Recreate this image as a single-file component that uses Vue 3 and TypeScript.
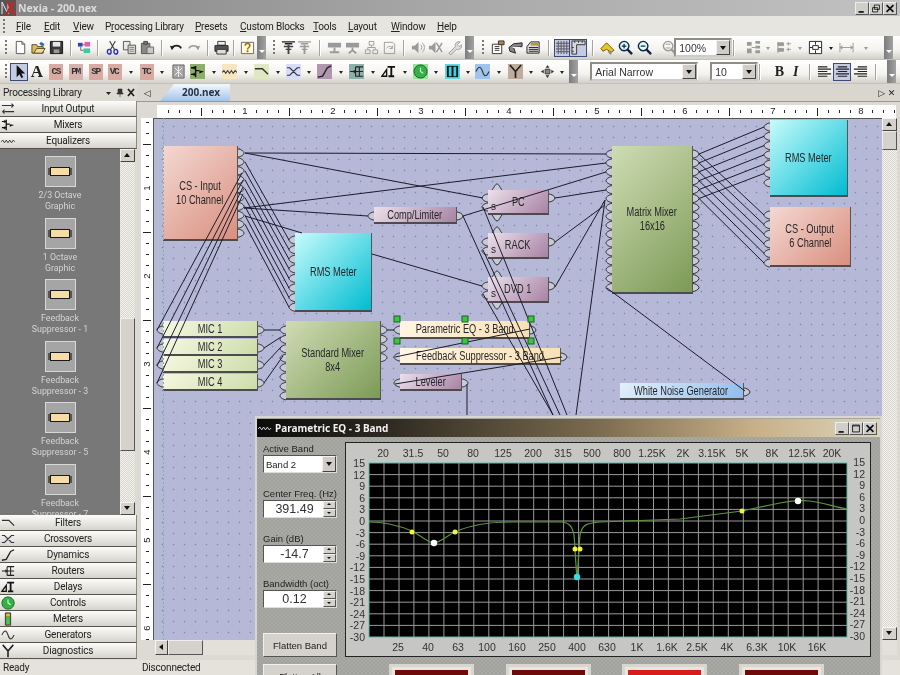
<template>
  <div class="app">
    <div class="titlebar">
      <svg class="logo" viewBox="0 0 16 16">
        <rect width="16" height="16" fill="#555" />
        <path d="M2 14V2M2 2l6 12M8 14V2" stroke="#eee" fill="none" />
        <path d="M6 15L14 1M7 1l8 14" stroke="#c02828" stroke-width="2.4" fill="none" />
      </svg>
      <span class="app-title">Nexia - 200.nex</span>
      <div class="win-btns">
        <span class="win-btn"><svg viewBox="0 0 14 12"><path d="M3 9h6v2H3z" fill="#111" /></svg></span>
        <span class="win-btn"><svg viewBox="0 0 14 12"><path d="M5 2h6v5H5zM3 5h6v5H3z" fill="#ddd" stroke="#111" /></svg></span>
        <span class="win-btn"><svg viewBox="0 0 14 12"><path d="M3 2l8 8M11 2l-8 8" stroke="#111" stroke-width="2" /></svg></span>
      </div>
    </div>

    <div class="menubar">
      <span class="grip grip-menu"></span>
      <span v-for="m in menus" :key="m.label" class="menu-item" :style="{ width: m.w + 'px' }">
        {{ m.pre }}<u>{{ m.key }}</u>{{ m.post }}
      </span>
    </div>

    <div v-for="(bar, b) in toolbars" :key="b" class="toolbar">
      <div
        v-for="(it, i) in bar"
        :key="i"
        class="slot"
        :style="{ width: it.w + 'px' }"
      >
        <span v-if="it.k === 'sep'" class="sep"></span>
        <span v-else-if="it.k === 'grip'" class="grip"></span>
        <span v-else-if="it.k === 'handle'" class="handle"><i></i></span>
        <span v-else-if="it.k === 'dd'" class="dd" :class="{ off: it.off }"></span>
        <span v-else-if="it.k === 'combo'" class="combo" :style="{ width: it.cw + 'px' }">
          <span class="combo-text">{{ it.t }}</span><span class="combo-btn"></span>
        </span>
        <span v-else-if="it.k === 'txt'" class="txt-tile" :style="{ background: it.bg }">{{ it.t }}</span>
        <span v-else-if="it.k === 'glyph'" class="glyph" :class="it.n">{{ it.t }}</span>
        <span v-else class="tool" :class="{ sel: it.sel }" :style="{ background: it.bg }">
          <svg viewBox="0 0 16 16" width="15" height="15">
            <path
              v-for="(s, j) in icons[it.n ?? '']"
              :key="j"
              :d="s.d"
              :fill="s.f ?? 'none'"
              :stroke="s.s ?? 'none'"
              :stroke-width="s.w ?? 1"
            />
          </svg>
        </span>
      </div>
    </div>

    <div class="main">
      <aside class="panel">
        <div class="panel-head">
          <span>Processing Library</span>
          <span class="panel-tools">
            <svg viewBox="0 0 30 10" width="30" height="10">
              <path d="M1 4h5l-2.500 3z" fill="#222" />
              <path d="M13 1h4v4h1v1h-6V5h1zM15 6v3" fill="#333" stroke="#333" stroke-width=".6" />
              <path d="M23 1l6 7M29 1l-6 7" stroke="#222" stroke-width="1.800" />
            </svg>
          </span>
        </div>
        <div v-for="c in topCats" :key="c.label" class="cat">
          <svg viewBox="0 0 16 16" width="14" height="14" class="cat-icon">
            <path v-for="(s, j) in icons[c.icon]" :key="j" :d="s.d" :fill="s.f ?? 'none'" :stroke="s.s ?? 'none'" :stroke-width="s.w ?? 1" />
          </svg>
          <span>{{ c.label }}</span>
        </div>
        <div class="lib">
          <div class="lib-list">
            <div v-for="item in libItems" :key="item.join()" class="lib-item">
              <span class="lib-tile"><i></i></span>
              <span v-for="line in item" :key="line" class="lib-label">{{ line }}</span>
            </div>
          </div>
          <div class="vscroll lib-scroll">
            <span class="sb-btn up"></span>
            <span class="sb-track"><span class="sb-thumb"></span></span>
            <span class="sb-btn down"></span>
          </div>
        </div>
        <div v-for="c in bottomCats" :key="c.label" class="cat">
          <svg viewBox="0 0 16 16" width="14" height="14" class="cat-icon">
            <path v-for="(s, j) in icons[c.icon]" :key="j" :d="s.d" :fill="s.f ?? 'none'" :stroke="s.s ?? 'none'" :stroke-width="s.w ?? 1" />
          </svg>
          <span>{{ c.label }}</span>
        </div>
      </aside>

      <section class="doc">
        <div class="tabs">
          <span class="tab-arrow">◁</span>
          <span class="tab">200.nex</span>
          <span class="tab-end">▷&nbsp;✕</span>
        </div>
        <div class="hruler">
          <svg viewBox="157 0 739 13" width="739" height="13">
            <path :d="hTicks" stroke="#222" fill="none" />
            <text v-for="n in 8" :key="n" :x="157 + n * 88" y="9" class="ruler-num">{{ n }}</text>
          </svg>
        </div>
        <div class="work">
          <div class="vruler">
            <svg viewBox="0 118 12 522" width="12" height="522">
              <path :d="vTicks" stroke="#222" fill="none" />
              <text v-for="n in 6" :key="n" x="6" :y="100 + n * 88" class="ruler-num" :transform="`rotate(-90 6 ${100 + n * 88}) translate(0 3)`">{{ n }}</text>
            </svg>
          </div>
          <div class="canvas">
            <div
              v-for="n in nodes"
              :key="n.id"
              class="node"
              :class="n.cls"
              :style="{ left: n.x - 153 + 'px', top: n.y - 118 + 'px', width: n.w + 'px', height: n.h + 'px' }"
            >
              <span v-for="line in n.lines" :key="line">{{ line }}</span>
            </div>
            <svg class="wires" viewBox="153 118 729 522" width="729" height="522">
              <path d="M163.500 118V640" stroke="#7fb4a4" stroke-dasharray="2 2" fill="none" />
              <path :d="portPaths" fill="#c9cad6" stroke="#2c2c34" stroke-width="1" />
              <path :d="wirePaths" fill="none" stroke="#1c1c2c" stroke-width="1" />
              <text v-for="y in [210, 253, 297]" :key="y" x="491" :y="y" class="s-label">s</text>
              <rect v-for="(h, i) in handles" :key="i" :x="h[0] - 3" :y="h[1] - 3" width="6" height="6" fill="#3ec43e" stroke="#14641c" />
            </svg>
          </div>
          <div class="vscroll main-scroll">
            <span class="sb-btn up"></span>
            <span class="main-thumb"></span>
            <span class="sb-track"></span>
            <span class="sb-btn down"></span>
          </div>
        </div>
        <div class="hscroll">
          <span class="sb-btn left"></span>
          <span class="h-thumb"></span>
        </div>
      </section>
    </div>

    <div class="statusbar">
      <span class="st-ready">Ready</span>
      <span>Disconnected</span>
    </div>

    <div class="eq-window">
      <div class="eq-title">
        <svg viewBox="0 0 16 8" width="15" height="8"><path d="M0 5l2-2 2 3 2-3 2 3 2-3 2 3 2-2" stroke="#ddd" fill="none" /></svg>
        <span>Parametric EQ - 3 Band</span>
        <div class="win-btns eq-btns">
          <span class="win-btn"><svg viewBox="0 0 14 12"><path d="M3 9h6v2H3z" fill="#111" /></svg></span>
          <span class="win-btn"><svg viewBox="0 0 14 12"><path d="M3 2h8v8H3z M3 3h8" fill="none" stroke="#111" /></svg></span>
          <span class="win-btn"><svg viewBox="0 0 14 12"><path d="M3 2l8 8M11 2l-8 8" stroke="#111" stroke-width="2" /></svg></span>
        </div>
      </div>
      <div class="eq-body">
        <div class="eq-controls">
          <label>Active Band</label>
          <div class="eq-select"><span>Band 2</span><span class="combo-btn"></span></div>
          <template v-for="f in fields" :key="f.label">
            <label>{{ f.label }}</label>
            <div class="eq-spin">
              <span class="spin-val">{{ f.value }}</span>
              <span class="spin-btns"><i class="u"></i><i class="d"></i></span>
            </div>
          </template>
          <button class="eq-btn first">Flatten Band</button>
          <button class="eq-btn">Flatten All</button>
        </div>
        <div class="eq-right">
          <div class="eq-chart">
            <svg viewBox="345 442 526 215" width="526" height="215">
              <rect x="369" y="463" width="478" height="174" fill="#000" stroke="#5fb7a8" />
              <path :d="gridPath" stroke="#9a9a9a" fill="none" />
              <path :d="curve" stroke="#5f9440" fill="none" stroke-width="1.200" />
              <circle v-for="(p, i) in yellowDots" :key="i" :cx="p[0]" :cy="p[1]" r="2.500" fill="#f2f23c" />
              <circle cx="434" cy="543" r="3.200" fill="#fff" />
              <circle cx="798" cy="501" r="3.200" fill="#fff" />
              <circle cx="577" cy="577" r="3.200" fill="#30e0e0" />
              <text v-for="t in topLabels" :key="t[0]" :x="t[1]" y="457" class="ax" text-anchor="middle">{{ t[0] }}</text>
              <text v-for="t in bottomLabels" :key="t[0]" :x="t[1]" y="651" class="ax" text-anchor="middle">{{ t[0] }}</text>
              <template v-for="(v, i) in dbLabels" :key="v">
                <text x="365" :y="467 + i * 11.600" class="ax" text-anchor="end">{{ v }}</text>
                <text x="865" :y="466 + i * 11.600" class="ax" text-anchor="end">{{ v }}</text>
              </template>
            </svg>
          </div>
          <div class="eq-meters">
            <span v-for="(m, i) in meters" :key="i" class="meter" :class="{ hot: m }"><i></i></span>
          </div>
        </div>
      </div>
    </div>
  </div>
</template>

<script setup lang="ts">
import { computed } from 'vue';

interface Shape { d: string; f?: string; s?: string; w?: number }
interface BarItem {
  c: number; k?: string; n?: string; t?: string; bg?: string; sel?: boolean; off?: boolean; cw?: number; w?: number;
}

const menus = [
  { label: 'File', pre: '', key: 'F', post: 'ile', w: 28 },
  { label: 'Edit', pre: '', key: 'E', post: 'dit', w: 29 },
  { label: 'View', pre: '', key: 'V', post: 'iew', w: 32 },
  { label: 'Processing Library', pre: 'P', key: 'r', post: 'ocessing Library', w: 90 },
  { label: 'Presets', pre: '', key: 'P', post: 'resets', w: 45 },
  { label: 'Custom Blocks', pre: '', key: 'C', post: 'ustom Blocks', w: 73 },
  { label: 'Tools', pre: '', key: 'T', post: 'ools', w: 35 },
  { label: 'Layout', pre: '', key: 'L', post: 'ayout', w: 43 },
  { label: 'Window', pre: '', key: 'W', post: 'indow', w: 46 },
  { label: 'Help', pre: '', key: 'H', post: 'elp', w: 30 }
];

const g = '#9a9a9a';
const icons: Record<string, Shape[]> = {
  new: [{ d: 'M3.500 1.500h6l3 3v10h-9z', f: '#fff', s: '#555' }, { d: 'M9.500 1.500v3h3', s: '#555' }],
  open: [{ d: 'M1 14V5h5l1 2h6v7z', f: '#d8bc62', s: '#5a4a20' }, { d: 'M3 14l3-5h9l-3 5z', f: '#efdc94', s: '#5a4a20' }, { d: 'M9 4c1-2 3-2 4 0l1-1v3h-3z', f: '#2d6fb5' }],
  save: [{ d: 'M1.500 1.500h13v13h-13z', f: '#3a3a3a', s: '#111' }, { d: 'M4 2h8v5H4z', f: '#e6e6e6' }, { d: 'M5 10h6v4H5z', f: '#999' }],
  color: [{ d: 'M1 3h5v4H1z', f: '#2a3fd0' }, { d: 'M8 2h6v5H8z', f: '#e060b0' }, { d: 'M7 9h7v5H7z', f: '#40c8a0' }, { d: 'M6 5h2M4 7v4h3', s: '#666' }],
  cut: [{ d: 'M5 1l5 9M11 1L6 10', s: '#444', w: 1.2 }, { d: 'M4.500 10a2 2.500 0 1 0 .1 5 2 2.500 0 1 0-.1-5zM11.500 10a2 2.500 0 1 0 .1 5 2 2.500 0 1 0-.1-5z', s: '#2a2ac0', w: 1.5 }],
  copy: [{ d: 'M1.500 1.500h7v9h-7z', f: '#e8e8e8', s: '#555' }, { d: 'M6.500 5.500h8v9h-8z', f: '#d8d8d0', s: '#555' }, { d: 'M8 8h5M8 10h5M8 12h5', s: '#888' }],
  paste: [{ d: 'M1.500 3.500h9v11h-9z', f: '#888', s: '#555' }, { d: 'M4 1.500h4v3H4z', f: '#777', s: '#444' }, { d: 'M7.500 7.500h7v7h-7z', f: '#c8c8c8', s: '#666' }],
  undo: [{ d: 'M3 9c2-4 8-4 10 0', s: '#222', w: 1.8 }, { d: 'M1 6l5 1-3 4z', f: '#222' }],
  redo: [{ d: 'M3 9c2-4 8-4 10 0', s: g, w: 1.6 }, { d: 'M15 6l-5 1 3 4z', f: g }],
  print: [{ d: 'M4 1.500h8v4H4z', f: '#eee', s: '#333' }, { d: 'M1 6h14v6H1z', f: '#555', s: '#222' }, { d: 'M3 10h10v5H3z', f: '#ddd', s: '#333' }],
  help: [{ d: 'M1.500 2.500h13v12h-13z', f: '#fffbe0', s: '#666' }, { d: 'M5.500 6c0-3 5-3 5 0 0 2-2.500 2-2.500 4', s: '#a07000', w: 1.6 }, { d: 'M7 11h2v2H7z', f: '#a07000' }],
  alignA: [{ d: 'M1 2h14M4 4h8', s: '#222', w: 1.5 }, { d: 'M3 7h10M5 10h6', s: '#444', w: 1.5 }, { d: 'M8 5v10', s: '#444', w: 2 }],
  alignB: [{ d: 'M1 2h14M4 4h8', s: g, w: 1.5 }, { d: 'M3 7h10M5 10h6', s: g, w: 1.5 }, { d: 'M8 5v10', s: g, w: 2 }],
  netA: [{ d: 'M1 3h14v5H1z', f: g }, { d: 'M8 8v4M3 13h10', s: g, w: 2 }],
  netB: [{ d: 'M1 3h14v5H1z', f: g }, { d: 'M8 8v3M4 14l4-3 4 3', s: g, w: 2 }],
  tree: [{ d: 'M5.500 1.500h5v4h-5zM1.500 10.500h5v4h-5zM9.500 10.500h5v4h-5z', s: g }, { d: 'M8 6v2M4 10V8h8v2', s: g }],
  page: [{ d: 'M2.500 2.500h9l2 2v10h-11z', s: g }, { d: 'M5 9c1-3 5-3 6 0M11 6v3H8', s: g }],
  speaker: [{ d: 'M1 6h3l4-4v12l-4-4H1z', f: g }, { d: 'M10 5c2 1 2 5 0 6M12 3c3 2 3 8 0 10', s: g }],
  mute: [{ d: 'M1 6h3l4-4v12l-4-4H1z', f: g }, { d: 'M9 3l6 10M15 3L9 13', s: g, w: 1.6 }],
  wrench: [{ d: 'M2 14l7-7c-1-3 1-6 5-5l-3 3 2 2 3-2c0 4-3 6-6 5l-6 6z', s: g, f: '#ddd' }],
  propA: [{ d: 'M2.500 4.500h10v10h-10z', f: '#fff', s: '#333' }, { d: 'M5 7h5M5 9h5M5 11h5', s: '#333' }, { d: 'M9 1h6v4H9z', f: '#b08a3a', s: '#333' }],
  propB: [{ d: 'M1 8l5-4 9-1v4l-9 1 2 6-6-2z', f: '#888', s: '#222' }, { d: 'M5 8h8', s: '#fff' }],
  propC: [{ d: 'M1 14V7l4-5h9v12z', f: '#ddd', s: '#222' }, { d: 'M3 8h10M3 10h10M3 12h10', s: '#222' }, { d: 'M5 3h8v3H5z', f: '#b89a3a' }],
  grid: [{ d: 'M1 3.500h14M1 6.500h14M1 9.500h14M1 12.500h14M3.500 1v14M6.500 1v14M9.500 1v14M12.500 1v14', s: '#555' }],
  rulers: [{ d: 'M1 1h14v4H6v10H1z', f: '#d8d8d8', s: '#333' }, { d: 'M4 1v2M8 1v2M12 1v2M1 8h2M1 12h2', s: '#333' }],
  hilite: [{ d: 'M1 9l6-6 8 8-3 2-5-3-4 2z', f: '#e8c820', s: '#6a5a10' }, { d: 'M9 12l3 3', s: '#888', w: 2 }],
  zoomIn: [{ d: 'M6.500 1.500a5 5 0 1 0 .1 0z', f: '#dff', s: '#124', w: 1.5 }, { d: 'M10 10l5 5', s: '#124', w: 2.5 }, { d: 'M4 6.500h5M6.500 4v5', s: '#124', w: 1.3 }],
  zoomOut: [{ d: 'M6.500 1.500a5 5 0 1 0 .1 0z', f: '#dff', s: '#124', w: 1.5 }, { d: 'M10 10l5 5', s: '#124', w: 2.5 }, { d: 'M4 6.500h5', s: '#124', w: 1.3 }],
  zoomFit: [{ d: 'M6.500 1.500a5 5 0 1 0 .1 0z', s: g, w: 1.5 }, { d: 'M10 10l5 5', s: g, w: 2.5 }, { d: 'M4 4.500h5M4 8.500h5', s: g }],
  distA: [{ d: 'M1 2h5v4H1zM1 9h5v5H1zM10 1h5v3h-5zM10 6h5v3h-5zM10 11h5v3h-5z', f: g }, { d: 'M6 8h4', s: g }],
  distB: [{ d: 'M1 2v12M1 3h6v3H1zM1 9h6v3H1z', f: g, s: g }, { d: 'M10 4h5M10 10h5M12 2v4M12 8v4', s: g }],
  distC: [{ d: 'M1.500 1.500h13v13h-13z', f: '#fff', s: '#222', w: 1 }, { d: 'M5 6h6v4H5z', s: '#222' }, { d: 'M8 2v3M8 11v3M2 8h3M11 8h3', s: '#222' }],
  distD: [{ d: 'M1 8h14M4 6l-3 2 3 2M12 6l3 2-3 2M1 3v10M15 3v10', s: g }],
  arrow: [{ d: 'M5 1v13l3-3 2 4 2-1-2-4h4z', f: '#111' }],
  pattern: [{ d: 'M2 1h12v14H2z', f: '#a8a8a8', s: '#666' }, { d: 'M4 4l8 8M12 4l-8 8M8 2v12', s: '#eee' }],
  mixers: [{ d: 'M1 4h5M1 11h5M6 2v12M6 7h4', s: '#111', w: 1.4 }, { d: 'M10 7l5 1-5 2z', f: '#111' }, { d: 'M2 4l3-2v4zM2 11l3-2v4z', f: '#111' }],
  io: [{ d: 'M1 4h11M4 11h11', s: '#333', w: 1.3 }, { d: 'M12 1l3 3-3 3zM4 8l-3 3 3 3z', f: '#333' }],
  eq: [{ d: 'M0 9l2-2 2 3 2-3 2 3 2-3 2 3 2-3 2 2', s: '#333', w: 1.1 }],
  filter: [{ d: 'M1 5h8l6 6', s: '#333', w: 1.5 }],
  cross: [{ d: 'M1 4h3l8 8h3M1 12h3l8-8h3', s: '#334', w: 1.3 }],
  dyn: [{ d: 'M1 14l5-1 5-9 4-2', s: '#222', w: 1.5 }],
  router: [{ d: 'M1 8h6M7 3v10M11 3v10M7 3h8M7 13h8M7 8h8', s: '#222', w: 1.2 }, { d: 'M5 6l3 2-3 2z', f: '#222' }],
  delay: [{ d: 'M1 13l5-7v7z', s: '#111', w: 1.5 }, { d: 'M7 3h8M11 3v10M8 13h6', s: '#111', w: 2 }],
  control: [{ d: 'M8 1a7 7 0 1 0 .1 0z', f: '#38b048', s: '#186020' }, { d: 'M8 4v4l3 2', s: '#dfd', w: 1.2 }],
  meter: [{ d: 'M5 1h6v14H5z', f: '#7a7a40', s: '#333' }, { d: 'M6 6h4v8H6z', f: '#3cc84a' }, { d: 'M6 2h4v3H6z', f: '#d8c838' }],
  meterCy: [{ d: 'M2 2h12v12H2z', f: '#111' }, { d: 'M4 3h3v10H4zM9 3h3v10H9z', f: '#38d0e0' }],
  gen: [{ d: 'M1 8c3-6 5-6 7 0s4 6 7 0', s: '#333', w: 1.2 }],
  diag: [{ d: 'M2 1l6 7 6-7M8 8v7', s: '#222', w: 1.8 }],
  move: [{ d: 'M8 1l2 3H6zM8 15l-2-3h4zM1 8l3-2v4zM15 8l-3 2V6z', f: '#333' }, { d: 'M5.500 5.500h5v5h-5z', f: '#888', s: '#333' }],
  alignL: [{ d: 'M1 3h10M1 5.500h14M1 8h10M1 10.500h14M1 13h10', s: '#222', w: 1.2 }],
  alignC: [{ d: 'M3 3h10M1 5.500h14M3 8h10M1 10.500h14M3 13h10', s: '#222', w: 1.2 }],
  alignR: [{ d: 'M5 3h10M1 5.500h14M5 8h10M1 10.500h14M5 13h10', s: '#222', w: 1.2 }]
};

function slots(items: BarItem[]): BarItem[] {
  return items.map((it, i) => {
    const l = i ? (items[i - 1].c + it.c) / 2 : 0;
    const r = i < items.length - 1 ? (it.c + items[i + 1].c) / 2 : it.c + 8;
    return { ...it, w: r - l };
  });
}

const toolbars = [
  slots([
    { c: 5, k: 'grip' }, { c: 19, n: 'new' }, { c: 39, n: 'open' }, { c: 57, n: 'save' }, { c: 71, k: 'sep' },
    { c: 84, n: 'color' }, { c: 98, k: 'sep' }, { c: 110, n: 'cut' }, { c: 130, n: 'copy' }, { c: 149, n: 'paste' },
    { c: 162, k: 'sep' }, { c: 175, n: 'undo' }, { c: 195, n: 'redo' }, { c: 208, k: 'sep' }, { c: 221, n: 'print' },
    { c: 234, k: 'sep' }, { c: 247, n: 'help' }, { c: 263, k: 'handle' }, { c: 273, k: 'grip' }, { c: 287, n: 'alignA' },
    { c: 306, n: 'alignB' }, { c: 320, k: 'sep' }, { c: 333, n: 'netA' }, { c: 352, n: 'netB' }, { c: 371, n: 'tree' },
    { c: 391, n: 'page' }, { c: 404, k: 'sep' }, { c: 418, n: 'speaker' }, { c: 435, n: 'mute' }, { c: 455, n: 'wrench' },
    { c: 471, k: 'handle' }, { c: 481, k: 'grip' }, { c: 497, n: 'propA' }, { c: 516, n: 'propB' }, { c: 534, n: 'propC' },
    { c: 550, k: 'sep' }, { c: 561, n: 'grid', sel: true }, { c: 579, n: 'rulers', sel: true }, { c: 593, k: 'sep' },
    { c: 606, n: 'hilite' }, { c: 625, n: 'zoomIn' }, { c: 644, n: 'zoomOut' }, { c: 664, n: 'zoomFit' },
    { c: 705, k: 'combo', t: '100%', cw: 58 }, { c: 739, k: 'sep' }, { c: 753, n: 'distA' }, { c: 767, k: 'dd', off: true },
    { c: 785, n: 'distB' }, { c: 799, k: 'dd', off: true }, { c: 816, n: 'distC' }, { c: 831, k: 'dd' },
    { c: 846, n: 'distD' }, { c: 862, k: 'dd', off: true }, { c: 892, k: 'handle' }
  ]),
  slots([
    { c: 5, k: 'grip' }, { c: 17, n: 'arrow', sel: true }, { c: 37, k: 'glyph', n: 'gl-a', t: 'A' }, { c: 56, k: 'txt', t: 'CS', bg: '#d9aaa2' },
    { c: 76, k: 'txt', t: 'PM', bg: '#d6b2ae' }, { c: 96, k: 'txt', t: 'SP', bg: '#d9aaa2' }, { c: 116, k: 'txt', t: 'VC', bg: '#d9aaa2' },
    { c: 130, k: 'dd' }, { c: 147, k: 'txt', t: 'TC', bg: '#d9aaa2' }, { c: 162, k: 'dd' }, { c: 177, n: 'pattern' },
    { c: 199, n: 'mixers', bg: '#8fae6c' }, { c: 213, k: 'dd' }, { c: 230, n: 'eq', bg: '#f6e6c0' }, { c: 245, k: 'dd' },
    { c: 262, n: 'filter', bg: '#dfe8c0' }, { c: 277, k: 'dd' }, { c: 294, n: 'cross', bg: '#d8dcf4' }, { c: 308, k: 'dd' },
    { c: 325, n: 'dyn', bg: '#b096ae' }, { c: 340, k: 'dd' }, { c: 357, n: 'router', bg: '#8fb0a8' }, { c: 372, k: 'dd' },
    { c: 389, n: 'delay' }, { c: 404, k: 'dd' }, { c: 421, n: 'control', bg: '#9ce0a0' }, { c: 435, k: 'dd' },
    { c: 453, n: 'meterCy', bg: '#60d8e0' }, { c: 467, k: 'dd' }, { c: 483, n: 'gen', bg: '#a0c4ec' }, { c: 498, k: 'dd' },
    { c: 516, n: 'diag', bg: '#c0ac9c' }, { c: 530, k: 'dd' }, { c: 548, n: 'move' }, { c: 562, k: 'dd' },
    { c: 574, k: 'handle' }, { c: 584, k: 'grip' }, { c: 644, k: 'combo', t: 'Arial Narrow', cw: 108 }, { c: 705, k: 'sep' },
    { c: 734, k: 'combo', t: '10', cw: 48 }, { c: 764, k: 'sep' }, { c: 778, k: 'glyph', n: 'gl-b', t: 'B' }, { c: 797, k: 'glyph', n: 'gl-i', t: 'I' },
    { c: 810, k: 'sep' }, { c: 823, n: 'alignL' }, { c: 842, n: 'alignC', sel: true }, { c: 862, n: 'alignR' },
    { c: 875, k: 'sep' }, { c: 892, k: 'handle' }
  ])
];

const topCats = [
  { label: 'Input Output', icon: 'io' },
  { label: 'Mixers', icon: 'mixers' },
  { label: 'Equalizers', icon: 'eq' }
];
const bottomCats = [
  { label: 'Filters', icon: 'filter' },
  { label: 'Crossovers', icon: 'cross' },
  { label: 'Dynamics', icon: 'dyn' },
  { label: 'Routers', icon: 'router' },
  { label: 'Delays', icon: 'delay' },
  { label: 'Controls', icon: 'control' },
  { label: 'Meters', icon: 'meter' },
  { label: 'Generators', icon: 'gen' },
  { label: 'Diagnostics', icon: 'diag' }
];
const libItems = [
  ['2/3 Octave', 'Graphic'],
  ['1 Octave', 'Graphic'],
  ['Feedback', 'Suppressor - 1'],
  ['Feedback', 'Suppressor - 3'],
  ['Feedback', 'Suppressor - 5'],
  ['Feedback', 'Suppressor - 7']
];

interface Ports { y: number; step: number; n: number }
interface FlowNode {
  id: string; x: number; y: number; w: number; h: number; cls: string; lines: string[]; left?: Ports; right?: Ports;
}

const nodes: FlowNode[] = [
  { id: 'in', x: 163, y: 146, w: 75, h: 95, cls: 'pink', lines: ['CS - Input', '10 Channel'], right: { y: 153, step: 8.9, n: 10 } },
  { id: 'rms1', x: 295, y: 233, w: 77, h: 79, cls: 'cyan', lines: ['RMS Meter'], left: { y: 240, step: 9.6, n: 8 } },
  { id: 'mic1', x: 163, y: 321, w: 95, h: 17, cls: 'lime', lines: ['MIC 1'], left: { y: 330, step: 0, n: 1 }, right: { y: 330, step: 0, n: 1 } },
  { id: 'mic2', x: 163, y: 339, w: 95, h: 17, cls: 'lime', lines: ['MIC 2'], left: { y: 348, step: 0, n: 1 }, right: { y: 348, step: 0, n: 1 } },
  { id: 'mic3', x: 163, y: 356, w: 95, h: 17, cls: 'lime', lines: ['MIC 3'], left: { y: 365, step: 0, n: 1 }, right: { y: 365, step: 0, n: 1 } },
  { id: 'mic4', x: 163, y: 374, w: 95, h: 17, cls: 'lime', lines: ['MIC 4'], left: { y: 383, step: 0, n: 1 }, right: { y: 383, step: 0, n: 1 } },
  { id: 'mix', x: 286, y: 321, w: 95, h: 79, cls: 'green', lines: ['Standard Mixer', '8x4'], left: { y: 330, step: 9.4, n: 8 }, right: { y: 330, step: 9.2, n: 4 } },
  { id: 'comp', x: 374, y: 207, w: 83, h: 17, cls: 'purple', lines: ['Comp/Limiter'], left: { y: 216, step: 0, n: 1 }, right: { y: 216, step: 0, n: 1 } },
  { id: 'peq', x: 400, y: 321, w: 130, h: 18, cls: 'cream', lines: ['Parametric EQ - 3 Band'], left: { y: 330, step: 0, n: 1 }, right: { y: 330, step: 0, n: 1 } },
  { id: 'fbs', x: 400, y: 348, w: 161, h: 17, cls: 'cream', lines: ['Feedback Suppressor - 3 Band'], left: { y: 357, step: 0, n: 1 }, right: { y: 357, step: 0, n: 1 } },
  { id: 'lev', x: 400, y: 374, w: 62, h: 17, cls: 'purple', lines: ['Leveler'], left: { y: 383, step: 0, n: 1 }, right: { y: 383, step: 0, n: 1 } },
  { id: 'pc', x: 488, y: 190, w: 61, h: 25, cls: 'purple', lines: ['PC'], left: { y: 198, step: 9, n: 2 }, right: { y: 198, step: 0, n: 1 } },
  { id: 'rack', x: 488, y: 233, w: 61, h: 26, cls: 'purple', lines: ['RACK'], left: { y: 242, step: 9, n: 2 }, right: { y: 242, step: 0, n: 1 } },
  { id: 'dvd', x: 488, y: 277, w: 61, h: 26, cls: 'purple', lines: ['DVD 1'], left: { y: 286, step: 9, n: 2 }, right: { y: 286, step: 0, n: 1 } },
  { id: 'matrix', x: 612, y: 146, w: 81, h: 148, cls: 'green', lines: ['Matrix Mixer', '16x16'], left: { y: 154, step: 8.9, n: 16 }, right: { y: 154, step: 8.9, n: 16 } },
  { id: 'rms2', x: 770, y: 120, w: 78, h: 77, cls: 'cyan', lines: ['RMS Meter'], left: { y: 127, step: 9.3, n: 7 } },
  { id: 'out', x: 770, y: 207, w: 81, h: 60, cls: 'pink', lines: ['CS - Output', '6 Channel'], left: { y: 215, step: 9.6, n: 6 } },
  { id: 'noise', x: 620, y: 383, w: 124, h: 17, cls: 'blue', lines: ['White Noise Generator'], right: { y: 392, step: 0, n: 1 } }
];

const portPaths = computed(() => {
  let d = '';
  for (const n of nodes) {
    if (n.left) {
      for (let i = 0; i < n.left.n; i++) {
        const y = n.left.y + i * n.left.step;
        d += `M${n.x} ${y - 4}C${n.x - 2} ${y - 4} ${n.x - 6} ${y - 2} ${n.x - 6} ${y}C${n.x - 6} ${y + 2} ${n.x - 2} ${y + 4} ${n.x} ${y + 4}`;
      }
    }
    if (n.right) {
      const x = n.x + n.w;
      for (let i = 0; i < n.right.n; i++) {
        const y = n.right.y + i * n.right.step;
        d += `M${x} ${y - 4}C${x + 2} ${y - 4} ${x + 6} ${y - 2} ${x + 6} ${y}C${x + 6} ${y + 2} ${x + 2} ${y + 4} ${x} ${y + 4}`;
      }
    }
  }
  // bridge pins above and below the source blocks
  for (const [t, b] of [[190, 215], [233, 259], [277, 303]]) {
    d += `M492 ${t}C494 ${t - 2} 495 ${t - 6} 497 ${t - 6}C499 ${t - 6} 500 ${t - 2} 502 ${t}`;
    d += `M492 ${b}C494 ${b + 2} 495 ${b + 6} 497 ${b + 6}C499 ${b + 6} 500 ${b + 2} 502 ${b}`;
  }
  return d;
});

const wires: number[][] = [
  [245, 153, 606, 154], [245, 153, 483, 198], [244, 208, 606, 163], [244, 208, 368, 216], [245, 216, 302, 233],
  [463, 216, 606, 172], [463, 216, 553, 415], [372, 254, 482, 286], [555, 198, 606, 190], [555, 242, 605, 205],
  [555, 287, 605, 200], [157, 330, 242, 173], [157, 348, 243, 180], [157, 366, 243, 187], [157, 383, 243, 194],
  [264, 330, 280, 330], [264, 348, 281, 337], [264, 365, 282, 346], [264, 383, 283, 356], [387, 330, 394, 330],
  [395, 357, 530, 329], [395, 384, 562, 357], [483, 207, 567, 415], [483, 250, 560, 415], [483, 294, 553, 415],
  [605, 200, 576, 415], [467, 384, 467, 415], [607, 288, 745, 391]
];

const wirePaths = computed(() => {
  let d = wires.map((w) => `M${w[0]} ${w[1]}L${w[2]} ${w[3]}`).join('');
  for (let i = 0; i < 8; i++) d += `M245 ${162 + i * 8.9}L289 ${240 + i * 9.6}`;
  for (let i = 0; i < 6; i++) d += `M699 ${154 + i * 8.9}L764 ${127 + i * 9.3}`;
  for (let i = 0; i < 6; i++) d += `M699 ${154 + i * 8.9}L764 ${215 + i * 9.6}`;
  return d;
});

const handles = [[397, 319], [465, 319], [531, 319], [397, 341], [465, 341], [531, 341]];

const hTicks = computed(() => {
  let d = '';
  for (let x = 157; x < 896; x += 11) {
    const major = (x - 157) % 88 === 0;
    const half = (x - 157) % 44 === 0;
    if (major) continue;
    d += `M${x + 0.5} ${half ? 3 : 5}V${half ? 11 : 8}`;
  }
  return d;
});
const vTicks = computed(() => {
  let d = '';
  for (let y = 122; y < 640; y += 11) {
    const half = (y - 100) % 44 === 0 && (y - 100) % 88 !== 0;
    if ((y - 100) % 88 === 0) continue;
    d += `M${half ? 2 : 5} ${y + 0.5}H${half ? 10 : 8}`;
  }
  return d;
});

const fields = [
  { label: 'Center Freq. (Hz)', value: '391.49' },
  { label: 'Gain (dB)', value: '-14.7' },
  { label: 'Bandwidth (oct)', value: '0.12' }
];

const gridPath = computed(() => {
  let d = '';
  for (let x = 384; x < 847; x += 14.97) d += `M${x.toFixed(1)} 463V637`;
  for (let i = 1; i < 15; i++) {
    const y = 463 + i * 11.6;
    d += `M369 ${y.toFixed(1)}H847`;
  }
  return d;
});

const curve = 'M369 522C385 522 400 526 412 531C420 535 428 543 434 543C440 543 448 535 455 532C468 526 485 522 510 522L560 522C568 522 572 525 574 535C575 545 576 570 577 578C578 570 579 545 580 535C582 525 586 523 600 522L680 519L742 511L780 503C790 501 798 500 810 501C825 503 835 507 847 509';
const yellowDots = [[412, 532], [455, 532], [575, 549], [580, 549], [742, 511]];

const topLabels: [string, number][] = [
  ['20', 383], ['31.5', 413], ['50', 443], ['80', 473], ['125', 503], ['200', 533], ['315', 563], ['500', 592],
  ['800', 622], ['1.25K', 652], ['2K', 683], ['3.15K', 712], ['5K', 742], ['8K', 772], ['12.5K', 802], ['20K', 832]
];
const bottomLabels: [string, number][] = [
  ['25', 398], ['40', 428], ['63', 458], ['100', 487], ['160', 517], ['250', 547], ['400', 577], ['630', 607],
  ['1K', 637], ['1.6K', 667], ['2.5K', 697], ['4K', 727], ['6.3K', 757], ['10K', 787], ['16K', 817]
];
const dbLabels = ['15', '12', '9', '6', '3', '0', '-3', '-6', '-9', '-12', '-15', '-18', '-21', '-24', '-27', '-30'];
const meters = [false, false, true, false];
</script>

<style>
html, body {
  margin: 0;
  background: #dcdad2;
}
</style>

<style scoped>
.app {
  width: 900px;
  height: 675px;
  position: relative;
  overflow: hidden;
  display: flex;
  flex-direction: column;
  background: #dcdad2;
  font-family: Roboto, "Liberation Sans", sans-serif;
  font-size: 10px;
  letter-spacing: -0.2px;
  color: #222;
  filter: blur(0.35px);
}

.titlebar {
  height: 16px;
  display: flex;
  align-items: center;
  background: linear-gradient(90deg, #858585, #a8a8a8 50%, #c2c2c2);
}
.logo {
  width: 16px;
  height: 16px;
}
.app-title {
  margin-left: 2px;
  font-family: "Noto Sans", sans-serif;
  font-weight: 700;
  font-size: 10.5px;
  letter-spacing: 0;
  color: #dcdcdc;
}
.win-btns {
  margin-left: auto;
  margin-right: 3px;
  display: flex;
}
.win-btn {
  width: 14px;
  height: 13px;
  box-sizing: border-box;
  background: #d0cec8;
  border: 1px solid #eee;
  border-right-color: #555;
  border-bottom-color: #555;
  display: flex;
}
.win-btn svg {
  width: 12px;
  height: 11px;
}

.menubar {
  height: 20px;
  display: flex;
  align-items: center;
  background: #e6e5df;
}
.grip-menu {
  margin: 0 11px 0 3px;
}
.menu-item {
  flex: none;
  white-space: nowrap;
}

.grip {
  display: block;
  width: 2px;
  height: 15px;
  background: repeating-linear-gradient(180deg, #777 0 2px, transparent 2px 4px);
}

.toolbar {
  height: 24px;
  display: flex;
  align-items: center;
  background: linear-gradient(180deg, #fff, #f4f3ef 60%, #d2d0c8);
  border-bottom: 1px solid #c4c2ba;
  box-sizing: border-box;
}
.slot {
  flex: none;
  display: flex;
  align-items: center;
  justify-content: center;
  height: 23px;
}
.sep {
  display: block;
  width: 1px;
  height: 16px;
  background: #a6a49c;
  border-right: 1px solid #fff;
}
.handle {
  position: relative;
  display: block;
  width: 9px;
  height: 23px;
  background: linear-gradient(90deg, #7c7c7c, #a2a2a2);
  flex: none;
}
.handle i {
  position: absolute;
  left: 2px;
  bottom: 3px;
  border: 3px solid transparent;
  border-top: 3px solid #fff;
}
.dd {
  display: block;
  border: 2.5px solid transparent;
  border-top: 3px solid #222;
  margin-top: 3px;
}
.dd.off {
  border-top-color: #999;
}
.tool {
  display: flex;
  align-items: center;
  justify-content: center;
  width: 15px;
  height: 15px;
  flex: none;
}
.tool.sel {
  width: 18px;
  height: 18px;
  background: #c4cbe2;
  outline: 1px solid #3c4a78;
  outline-offset: -1px;
}
.txt-tile {
  display: block;
  width: 14px;
  height: 16px;
  flex: none;
  text-align: center;
  font: 700 9.5px/16px "Liberation Mono", monospace;
  letter-spacing: -1.5px;
  text-indent: -1px;
  color: #333;
}
.glyph {
  display: block;
  flex: none;
  font-family: "Liberation Serif", serif;
  font-weight: 700;
  color: #222;
  line-height: 16px;
}
.gl-a {
  font-size: 17px;
}
.gl-b {
  font-size: 14px;
}
.gl-i {
  font-size: 14px;
  font-style: italic;
}
.combo {
  display: flex;
  flex: none;
  align-items: center;
  justify-content: space-between;
  height: 19px;
  box-sizing: border-box;
  background: #fff;
  border: 2px solid #8e8c84;
  border-right-color: #ccc;
  border-bottom-color: #ccc;
  font-family: "Liberation Sans", sans-serif;
  font-size: 10.5px;
  letter-spacing: 0;
}
.combo-text {
  padding-left: 3px;
  color: #333;
}
.combo-btn {
  position: relative;
  display: block;
  width: 14px;
  height: 100%;
  flex: none;
  box-sizing: border-box;
  background: #cfcdc5;
  border: 1px solid #f2f2f2;
  border-right-color: #444;
  border-bottom-color: #444;
}
.combo-btn::after {
  content: "";
  position: absolute;
  left: 3px;
  top: 5px;
  border: 3px solid transparent;
  border-top: 4px solid #111;
}

.main {
  flex: 1;
  min-height: 0;
  display: flex;
}
.panel {
  width: 137px;
  flex: none;
  display: flex;
  flex-direction: column;
}
.panel-head {
  height: 17px;
  flex: none;
  display: flex;
  align-items: center;
  justify-content: space-between;
  padding: 0 2px 0 3px;
  background: #dcdad2;
}
.panel-tools {
  display: flex;
}
.cat {
  position: relative;
  height: 16px;
  flex: none;
  box-sizing: border-box;
  display: flex;
  align-items: center;
  justify-content: center;
  background: linear-gradient(180deg, #fcfcfa, #d6d4cc);
  border-bottom: 1px solid #55544f;
  border-right: 1px solid #8a8980;
}
.cat-icon {
  position: absolute;
  left: 1px;
  top: 1px;
}
.lib {
  height: 366px;
  flex: none;
  display: flex;
  overflow: hidden;
}
.lib-list {
  width: 120px;
  flex: none;
  background: #787878;
  padding-top: 7px;
  box-sizing: border-box;
  overflow: hidden;
}
.lib-item {
  height: 61.6px;
  display: flex;
  flex-direction: column;
  align-items: center;
}
.lib-tile {
  display: flex;
  align-items: center;
  justify-content: center;
  width: 31px;
  height: 31px;
  flex: none;
  box-sizing: border-box;
  background: #a5a5a5;
  border: 1px solid #d8d8d8;
  margin-bottom: 3px;
}
.lib-tile i {
  display: block;
  width: 18px;
  height: 7px;
  background: #f6dca6;
  border: 1.5px solid #1a1a1a;
  box-shadow: -3px 0 0 -1px #555, 3px 0 0 -1px #555;
}
.lib-label {
  font-size: 8.8px;
  letter-spacing: 0;
  line-height: 11px;
  color: #d4d4d4;
  white-space: nowrap;
}
.vscroll {
  flex: none;
  width: 15px;
  display: flex;
  flex-direction: column;
  background: repeating-conic-gradient(#f2f1ec 0 25%, #d8d6ce 0 50%) 0 0 / 2px 2px;
}
.lib-scroll {
  border-right: 2px solid #dcdad2;
}
.sb-btn {
  position: relative;
  display: block;
  height: 13px;
  flex: none;
  box-sizing: border-box;
  background: #d4d2ca;
  border: 1px solid #f4f4f4;
  border-right-color: #444;
  border-bottom-color: #444;
}
.sb-btn::after {
  content: "";
  position: absolute;
  left: 3px;
  border: 3.5px solid transparent;
}
.sb-btn.up::after {
  top: 0;
  border-bottom: 4px solid #111;
}
.sb-btn.down::after {
  top: 3px;
  border-top: 4px solid #111;
}
.sb-track {
  flex: 1;
  display: block;
}
.sb-thumb {
  display: block;
  margin-top: 156px;
  height: 133px;
  box-sizing: border-box;
  background: #d4d2ca;
  border: 1px solid #eee;
  border-right-color: #555;
  border-bottom-color: #555;
}

.doc {
  flex: 1;
  min-width: 0;
  display: flex;
  flex-direction: column;
}
.tabs {
  position: relative;
  height: 18px;
  flex: none;
  display: flex;
  align-items: flex-end;
  background: #d8d6ce;
  border-bottom: 1px solid #8e9aa8;
  box-sizing: border-box;
}
.tab-arrow {
  width: 20px;
  font-size: 9px;
  line-height: 16px;
  text-align: center;
  font-family: "DejaVu Sans", sans-serif;
}
.tab {
  height: 17px;
  margin-left: 3px;
  width: 70px;
  box-sizing: border-box;
  text-align: right;
  padding-right: 10px;
  line-height: 17px;
  font-family: "Noto Sans", sans-serif;
  font-weight: 700;
  font-size: 10px;
  letter-spacing: 0;
  color: #28324c;
  background: linear-gradient(180deg, #f4f8fc, #a4c4e8);
  clip-path: polygon(0 100%, 14px 0, 100% 0, 100% 100%);
}
.tab-end {
  margin-left: auto;
  margin-right: 5px;
  font-size: 9px;
  line-height: 16px;
  font-family: "DejaVu Sans", sans-serif;
}
.hruler {
  height: 16px;
  flex: none;
  display: flex;
  padding: 3px 0 0 20px;
  box-sizing: border-box;
  overflow: hidden;
}
.hruler svg {
  background: #fff;
  flex: none;
}
.ruler-num {
  font-family: "Liberation Sans", sans-serif;
  font-size: 9.5px;
  letter-spacing: 0;
  text-anchor: middle;
  fill: #222;
}
.work {
  height: 522px;
  flex: none;
  display: flex;
  padding-left: 4px;
}
.vruler {
  width: 12px;
  flex: none;
  background: #fff;
}
.canvas {
  position: relative;
  width: 729px;
  flex: none;
  overflow: hidden;
  box-shadow: inset 1px 1px 0 #555;
  background-color: #b5b8d6;
  background-image: radial-gradient(circle at 50% 50%, #83869f 0.6px, transparent 1.1px);
  background-size: 11px 11px;
  background-position: 4px 3px;
}
.wires {
  position: absolute;
  left: 0;
  top: 0;
  pointer-events: none;
}
.s-label {
  font-family: "Liberation Sans", sans-serif;
  font-size: 10px;
  letter-spacing: 0;
  fill: #222;
}
.node {
  position: absolute;
  box-sizing: border-box;
  display: flex;
  flex-direction: column;
  align-items: center;
  justify-content: center;
  text-align: center;
  font-family: "Liberation Sans", sans-serif;
  font-size: 12px;
  letter-spacing: 0;
  line-height: 14px;
  white-space: nowrap;
  color: #26262a;
  border-right: 1px solid #555;
  border-bottom: 2px solid #4c4c50;
}
/* the blocks use Arial Narrow in the original */
.node span {
  display: block;
  transform: scaleX(0.77);
}
.pink { background: linear-gradient(135deg, #f4d8d2, #d98f7f); }
.cyan { background: linear-gradient(135deg, #c8fbfb, #00bcd2); }
.lime { background: linear-gradient(135deg, #f6f8e2, #cddcaa); }
.green { background: linear-gradient(135deg, #cfdcb4, #7c9a56); }
.purple { background: linear-gradient(135deg, #ece0ea, #a782a4); }
.cream { background: linear-gradient(135deg, #fff6e4, #f8dfb2); }
.blue { background: linear-gradient(135deg, #e4f0fc, #8fbcec); }

.vscroll.main-scroll {
  width: 15px;
}
.main-thumb {
  display: block;
  height: 19px;
  flex: none;
  box-sizing: border-box;
  background: #d4d2ca;
  border: 1px solid #eee;
  border-right-color: #555;
  border-bottom-color: #555;
}
.hscroll {
  height: 15px;
  flex: none;
  margin: 0 3px 0 18px;
  display: flex;
  background: #e2e0d8;
}
.sb-btn.left {
  width: 13px;
  height: 15px;
}
.sb-btn.left::after {
  left: 0;
  top: 3px;
  border-right: 4px solid #111;
}
.h-thumb {
  display: block;
  width: 35px;
  box-sizing: border-box;
  background: #d4d2ca;
  border: 1px solid #eee;
  border-right-color: #555;
  border-bottom-color: #555;
}

.statusbar {
  height: 15px;
  flex: none;
  display: flex;
  align-items: center;
  background: #e4e2da;
}
.st-ready {
  width: 142px;
  padding-left: 3px;
  box-sizing: border-box;
}

.eq-window {
  position: absolute;
  left: 255px;
  top: 416px;
  width: 627px;
  height: 259px;
  box-sizing: border-box;
  border: 2px solid #d8d6ce;
  border-bottom: none;
  background: repeating-conic-gradient(#a9a9a5 0 25%, #a1a19d 0 50%) 0 0 / 4px 4px;
  overflow: hidden;
  letter-spacing: 0;
}
.eq-title {
  height: 18px;
  margin-top: 1px;
  display: flex;
  align-items: center;
  gap: 2px;
  padding-left: 1px;
  font-family: "Noto Sans", sans-serif;
  font-weight: 700;
  font-size: 10px;
  color: #f2f2f2;
  background: linear-gradient(90deg, #0c0c0c, #2c2820 20%, #7c6c50 55%, #c8b088 80%, #dcd4bc);
}
.eq-body {
  display: flex;
  padding: 5px 0 0 6px;
}
.eq-controls {
  width: 82px;
  flex: none;
  display: flex;
  flex-direction: column;
  font-family: "Liberation Sans", sans-serif;
  font-size: 9.5px;
}
.eq-controls label {
  display: block;
  height: 13px;
  line-height: 13px;
  margin-top: 14px;
  white-space: nowrap;
  color: #222;
}
.eq-controls label:first-child {
  margin-top: 0;
}
.eq-select, .eq-spin {
  width: 74px;
  height: 18px;
  box-sizing: border-box;
  display: flex;
  align-items: center;
  justify-content: space-between;
  background: #fff;
  border: 1px solid #555;
  border-right-color: #ddd;
  border-bottom-color: #ddd;
  padding-left: 2px;
}
.spin-val {
  flex: 1;
  text-align: center;
  font-size: 12.5px;
  color: #333;
}
.spin-btns {
  width: 13px;
  height: 100%;
  display: flex;
  flex-direction: column;
  flex: none;
}
.spin-btns i {
  position: relative;
  flex: 1;
  display: block;
  background: #d4d2ca;
  border: 1px solid #f2f2f2;
  border-right-color: #555;
  border-bottom-color: #555;
}
.spin-btns i::after {
  content: "";
  position: absolute;
  left: 3px;
  border: 2px solid transparent;
}
.spin-btns .u::after {
  top: -1px;
  border-bottom: 2px solid #111;
}
.spin-btns .d::after {
  top: 2px;
  border-top: 2px solid #111;
}
.eq-btn {
  width: 74px;
  height: 24px;
  flex: none;
  padding: 0;
  font: inherit;
  font-size: 9.5px;
  color: #222;
  background: #d4d2ca;
  border: 1px solid #f0f0f0;
  border-right-color: #555;
  border-bottom-color: #555;
}
.eq-btn.first {
  margin-top: 25px;
  margin-bottom: 7px;
}
.eq-right {
  flex: 1;
  display: flex;
  flex-direction: column;
}
.eq-chart {
  width: 526px;
  height: 215px;
  box-sizing: border-box;
  flex: none;
  background: #c6c6c4;
  outline: 1px solid #222;
  outline-offset: -1px;
}
.ax {
  font-family: "Liberation Sans", sans-serif;
  font-size: 10.5px;
  fill: #333;
}
.eq-meters {
  margin-top: 7px;
  display: flex;
  padding-left: 44px;
  gap: 31.5px;
}
.meter {
  display: block;
  width: 85px;
  height: 20px;
  box-sizing: border-box;
  border: 3px solid #d8d6ce;
  padding: 3px;
  background: #e8e6e0;
}
.meter i {
  display: block;
  height: 100%;
  background: #6e0a0a;
}
.meter.hot i {
  background: #d81c1c;
}
</style>
